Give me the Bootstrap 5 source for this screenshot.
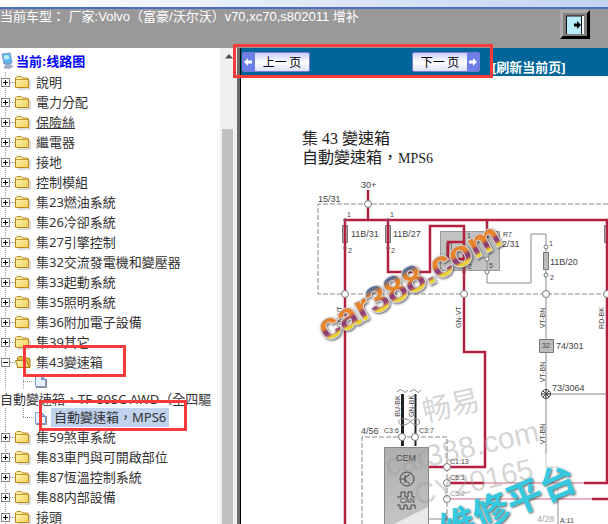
<!DOCTYPE html>
<html lang="zh-Hant">
<head>
<meta charset="utf-8">
<meta name="viewport" content="width=device-width, initial-scale=1">
<title>线路图</title>
<link href="https://cdn.jsdelivr.net/npm/bootstrap@5.3.0/dist/css/bootstrap.min.css" rel="stylesheet">
<style>
body{font:13px/20px "Noto Sans","Noto Sans CJK TC",sans-serif;color:#333;background:#fff}
.topstrip{height:9px;background:linear-gradient(90deg,#fff,#c3d3f0);border-bottom:2px solid #4a6fc0}
.carbar{height:39px;background:#999;color:#fff;font:13px/16px "Liberation Sans","Noto Sans CJK SC",sans-serif}
.exitbtn{width:30px;height:29px;margin:1px 18px 0 0;background:#808080;border:3px solid;border-color:#aaa #000 #000 #aaa}
.frames{min-height:0}
.treepane{width:220px}
.treehead{height:24px;padding-top:4px;font:bold 13px/20px "Liberation Sans","Noto Sans CJK SC",sans-serif}
.treehead a{color:#00f}
.tree a{color:#333;text-decoration:none;white-space:nowrap}
.tree a.hovered{text-decoration:underline}
.noderow{height:20px;background:linear-gradient(#999 50%,transparent 50%) 5px 0/1px 2px repeat-y}
.tog{width:9px;height:9px;margin-left:1px;border:1px solid #848484;background:#fff;color:#000}
.dots{width:5px;height:1px;background:repeating-linear-gradient(90deg,#999 0 1px,transparent 1px 2px)}
.dots.far{width:12px}
.fold{width:16px;height:16px;margin-right:5px}
.leafrow{height:18px;padding-left:23px;background:linear-gradient(#999 50%,transparent 50%) 5px 0/1px 2px repeat-y,linear-gradient(#999 50%,transparent 50%) 23px 0/1px 2px repeat-y}
.leafrow.final{height:19px;background:linear-gradient(#999 50%,transparent 50%) 5px 0/1px 2px repeat-y,repeating-linear-gradient(#999 0 1px,transparent 1px 2px) 23px 0/1px 10px no-repeat}
.leaftext{height:18px;line-height:18px}
.tree a.chosen{background:#c1d2ee;padding:0 3px;line-height:19px}
.redbox{position:absolute;border:3px solid #f93a3a;pointer-events:none;z-index:3}
.rb-group{left:23px;top:-7px;width:103px;height:32px}
.rb-leaf{left:39px;top:-8px;width:148px;height:31px}
.rb-page{left:-8px;top:-4px;width:260px;height:34px}
.sbar{width:17px;background:#f0f0f0}
.sup{height:17px}
.sthumb{background:#c1c1c1;margin:0 0 0 2px}
.gutter{width:4px;background:#6b6b6b;border-right:1px solid #000}
.docpane{min-width:0}
.pagebar{height:28px;background:#069;padding-left:1px}
.pgbtn{height:20px;width:68px;border:1px solid #7a7ad6;border-radius:2px;background:linear-gradient(#c9cffa,#fff 50%,#dde0fa);color:#000;font:12px/18px "Noto Sans CJK SC",sans-serif}
.pgbtn .cap{width:12px;background:#6d7ee6}
.pggap{gap:102px}
.reload{color:#fff;font:bold 13px/18px "Noto Sans","Noto Sans CJK SC",sans-serif;text-decoration:none}
.docttl{font:16px/19px "Liberation Serif","Noto Sans CJK TC",serif;color:#222;padding:53px 0 3px 61px}
.docttl span{font-size:14px}
.wiring{font-family:"Liberation Sans","Noto Sans CJK SC",sans-serif;font-size:9px;fill:#444}
.wiring .sm{font-size:7px}
.red{stroke:#b3203f;stroke-width:2.500;fill:none}
.pink{stroke:#eeb0bd;stroke-width:2;fill:none}
.gry{stroke:#8a8a8a;stroke-width:1;fill:none}
.dsh{stroke:#8a8a8a;stroke-width:1;fill:none;stroke-dasharray:5 2}
.pin{fill:#fff;stroke:#777;stroke-width:1}
.ghost{fill:#999;fill-opacity:.42}
</style>
<script src="https://cdn.jsdelivr.net/npm/bootstrap@5.3.0/dist/js/bootstrap.bundle.min.js"></script>
</head>
<body class="vh-100 overflow-hidden d-flex flex-column">
<svg width="0" height="0" class="position-absolute" aria-hidden="true">
<defs>
<linearGradient id="gold" x1="0" y1="0" x2="1" y2="1"><stop offset="0" stop-color="#fffbc0"/><stop offset="1" stop-color="#f2ce58"/></linearGradient>
<symbol id="folder" viewBox="0 0 16 16"><path d="M2.500 15h12.500v-9" stroke="#bbb" fill="none"/><path d="M.5 13.500V4l1.500-1.500h4L7.500 4h5l1 1v8.500z" fill="url(#gold)" stroke="#b98a1e"/><path d="M1 5.500h12" stroke="#c99b2c"/></symbol>
<symbol id="openfolder" viewBox="0 0 16 16"><path d="M2.500 13.500V4L4 2.500h3L8.500 4h5l1.500 1v8.500z" fill="#e5b93e" stroke="#a87c15"/><path d="M.5 6.500h11l3 7H3z" fill="url(#gold)" stroke="#a87c15"/></symbol>
<symbol id="sheet" viewBox="0 0 16 16"><path d="M1 14.500h10.500V6" stroke="#888" fill="none"/><path d="M.5 2.500h6l4 4v7h-10z" fill="#e6effc" stroke="#7f9fd2"/><path d="M6.500 2.500v4h4z" fill="#8fb0e4" stroke="#6a8dc8"/></symbol>
<symbol id="plus" viewBox="0 0 7 7"><path d="M1 3.500h5M3.500 1v5" stroke="#000"/></symbol>
<symbol id="minus" viewBox="0 0 7 7"><path d="M1 3.500h5" stroke="#000"/></symbol>
</defs>
</svg>
<div class="topstrip flex-shrink-0"></div>
<header class="carbar flex-shrink-0 d-flex justify-content-between">
<div class="text-nowrap">当前车型： 厂家:Volvo（富豪/沃尔沃）v70,xc70,s802011 增补</div>
<button class="exitbtn p-0 d-flex align-items-center justify-content-center flex-shrink-0" aria-label="退出"><svg width="18" height="20" viewBox="0 0 18 20"><path d="M0 1h18v18H0z" fill="#b9ecfa"/><path d="M0 1h18M.5 1v18" stroke="#111"/><path d="M15.500 1v18" stroke="#111"/><path d="M17 1v18" stroke="#fff" stroke-width="2"/><path d="M8 8.500h3V6l4 4-4 4v-2.500H8z" fill="#000"/></svg></button>
</header>
<main class="frames d-flex flex-grow-1">
<nav class="treepane flex-shrink-0 overflow-hidden" aria-label="目录">
<div class="treehead d-flex"><svg width="16" height="18" viewBox="0 0 16 18" class="flex-shrink-0"><path d="M2 2l8-1 2 10-8 1z" fill="#54b7ee" stroke="#7c98c8"/><path d="M3.500 3.500l5-.5 1 4-5 1z" fill="#b9e8ff"/><path d="M6 12l4-.5 1 2 2 1-4 2-5-.5z" fill="#9fb2d0" stroke="#7f8ca8" stroke-width=".6"/></svg><a href="#" class="text-decoration-none">当前:线路图</a></div>
<ul class="tree list-unstyled mb-0" id="tree"></ul>
</nav>
<div class="sbar flex-shrink-0 d-flex flex-column" aria-hidden="true"><div class="sup d-flex justify-content-center align-items-center"><svg width="8" height="5"><path d="M0 4.500L4 0l4 4.500z" fill="#505050"/></svg></div><div class="pt-5"></div><div class="pt-3"></div><div class="sthumb flex-grow-1 me-1"></div></div>
<div class="gutter flex-shrink-0"></div>
<section class="docpane flex-grow-1 d-flex flex-column">
<div class="pagebar position-relative flex-shrink-0 d-flex align-items-center">
<div class="pggap d-flex">
<button class="pgbtn p-0 d-flex flex-shrink-0"><span class="cap align-self-stretch d-flex align-items-center"><svg width="11" height="12"><path d="M1 6l4-4v2.500h4v3H5V10z" fill="#fff"/></svg></span><span class="flex-grow-1">上一 页</span></button>
<button class="pgbtn p-0 d-flex flex-shrink-0"><span class="flex-grow-1">下一 页</span><span class="cap align-self-stretch d-flex align-items-center"><svg width="11" height="12"><path d="M10 6L6 2v2.500H2v3h4V10z" fill="#fff"/></svg></span></button>
</div>
<a href="#" class="reload align-self-end text-nowrap ms-2 ps-1">[刷新当前页]</a>
<div class="redbox rb-page"></div>
</div>
<h1 class="docttl mb-0 text-nowrap">集 43 變速箱<br>自動變速箱，<span>MPS6</span></h1>
<svg class="wiring w-100 flex-shrink-0" viewBox="241 170 367 354" role="img" aria-label="自動變速箱線路圖">
<defs>
<linearGradient id="rain" x1="0" y1="0" x2="0" y2="1"><stop offset=".2" stop-color="#4a6a9c"/><stop offset=".36" stop-color="#e8852a"/><stop offset=".5" stop-color="#e8852a"/><stop offset=".6" stop-color="#843a78"/><stop offset=".68" stop-color="#a04a70"/><stop offset=".76" stop-color="#f3e02c"/><stop offset=".85" stop-color="#d8a020"/></linearGradient>
<filter id="sh" x="-10%" y="-20%" width="120%" height="150%"><feDropShadow dx="1" dy="1" stdDeviation="1" flood-color="#333" flood-opacity=".8"/></filter>
<linearGradient id="ecu" x1="0" y1="0" x2="0" y2="1"><stop offset="0" stop-color="#aeaeae"/><stop offset="1" stop-color="#c4c4c4"/></linearGradient>
</defs>
<path class="dsh" d="M608 203H318V293H608"/>
<path class="dsh" d="M362 524V436H447V524"/>
<path fill="#c2c2c2" stroke="#999" d="M440.500 230.500h59v39h-59z"/>
<path class="gry" d="M487 258v24h44v-49h15v220M487 258l5-8M546 393h61"/>
<path stroke="#ccc" fill="none" d="M546 453v13h12v34"/>
<path class="gry" d="M558 500v24M429 518h20"/>
<g fill="#bbb" stroke="#777"><path d="M342.500 224.500h5v17h-5zM385.500 224.500h5v17h-5zM543.500 251.500h5v17h-5zM604.500 224.500h5v17h-5zM446.500 242.500h5v15h-5zM539.500 338.500h14v13h-14z"/></g>
<text class="sm" text-anchor="middle" transform="translate(342 316) rotate(-90)">GN-VT</text>
<path class="red" d="M368 189v30M344 219H608M345 219V524M388 219V271H430V225H464V351H485V466H429M464 241H448V258H464M487 219v18M607 219V482"/>
<path class="red" d="M447 482h37M584 482h24M592 498h16"/><path class="pink" d="M484 482h100M447 498h145"/>
<path d="M402.500 393v52" stroke="#222" stroke-width="3"/><path d="M415.500 393v52" stroke="#222" stroke-width="2"/>
<path class="gry" d="M397 391q4-4 6-1t5-1M410 391q4-4 6-1t5-1M402 418c8-2 9 6 14 6 5 0 5-6 0-6-5 0-8 7-14 6-5-1-4-6 0-6"/>
<path fill="url(#ecu)" stroke="#888" d="M384.500 446.500h44V524h-44z"/><path d="M392 524l36-18v18z" fill="#e9e9e9"/>
<g fill="none" stroke="#444"><circle cx="407" cy="478" r="7"/><path d="M401 478h4M405 474v8M405 477l5-4M405 479l5 4"/><path d="M397 496h4v-5h4v5h3v-5h4v5h3M397 504h3v4h4v-4h3v4h4v-4h4v4"/><circle cx="546" cy="393" r="4.500"/><path d="M543 390l6 6M549 390l-6 6M541 393h10M546 389v8"/></g>
<g class="pin"><circle cx="368" cy="203" r="3.500"/><circle cx="345" cy="293" r="3.500"/><circle cx="464" cy="293" r="3.500"/><circle cx="546" cy="293" r="3.500"/><circle cx="607" cy="293" r="3.500"/><circle cx="402" cy="436" r="3.500"/><circle cx="415" cy="436" r="3.500"/><circle cx="447" cy="466" r="3.500"/><circle cx="447" cy="482" r="3.500"/><circle cx="447" cy="498" r="3.500"/><circle cx="546" cy="246" r="2"/><circle cx="546" cy="274" r="2"/><circle cx="487" cy="258" r="2"/><circle cx="487" cy="271" r="2"/></g>
<g fill="#b3244a" stroke="#777" stroke-width=".5"><circle cx="345" cy="219" r="1.500"/><circle cx="388" cy="219" r="1.500"/><circle cx="345" cy="247" r="1.500"/><circle cx="388" cy="247" r="1.500"/><circle cx="464" cy="271" r="1.500"/></g>
<text x="361" y="187">30+</text><text x="318" y="201">15/31</text><text x="351" y="236">11B/31</text><text x="393" y="236">11B/27</text><text x="550" y="264">11B/20</text><text x="556" y="348">74/301</text><text x="552" y="390">73/3064</text><text x="361" y="433">4/56</text><text x="396" y="460">CEM</text><text x="502" y="246">2/31</text><text x="537" y="521" fill-opacity=".5">4/28</text>
<g class="sm"><text x="347" y="216">1</text><text x="390" y="216">1</text><text x="348" y="252">2</text><text x="391" y="252">2</text><text x="467" y="237">1</text><text x="468" y="268">2</text><text x="489" y="267">5</text><text x="549" y="245">1</text><text x="550" y="279">2</text><text x="503" y="236">R7</text><text x="542" y="347">32</text><text x="384" y="432">C3:6</text><text x="419" y="432">C3:7</text><text x="450" y="463">C1:13</text><text x="450" y="479">C5:1</text><text x="450" y="495" fill-opacity=".6">C5:2</text><text x="400" y="502">CAN</text><text x="560" y="522">A:11</text>
<g text-anchor="middle"><text transform="translate(461 316) rotate(-90)">GN-VT</text><text transform="translate(545 317) rotate(-90)">VT-BN</text><text transform="translate(545 371) rotate(-90)">VT-BN</text><text transform="translate(545 433) rotate(-90)">VT-BN</text><text transform="translate(604 317) rotate(-90)">RD-BK</text><text transform="translate(400 405) rotate(-90)">BU-BK</text><text transform="translate(414 405) rotate(-90)">GN-BK</text></g></g>
<g class="ghost"><text transform="translate(425 421) rotate(-13)" font-size="29">畅易</text><text transform="translate(388 475) rotate(-13)" font-size="30">car388.com</text><text transform="translate(417 504) rotate(-13)" font-size="29">CY20165</text></g>
<g font-weight="bold" filter="url(#sh)"><text transform="translate(326 341) rotate(-29)" font-size="37" fill="url(#rain)" stroke="#d8d4d8" stroke-width="2" paint-order="stroke">car388.com</text></g>
<g font-weight="bold" filter="url(#sh)"><text transform="translate(508 503) rotate(-23)" y="13" text-anchor="middle" font-size="36" fill="#35c8de">维修平台</text></g>
</svg>
</section>
</main>
<script>
const nodes = ['說明','電力分配','保險絲','繼電器','接地','控制模組','集23燃油系統','集26冷卻系統','集27引擎控制','集32交流發電機和變壓器','集33起動系統','集35照明系統','集36附加電子設備','集39其它','集43變速箱','集59煞車系統','集83車門與可開啟部位','集87恆溫控制系統','集88内部設備','接頭'];
const leaves = '<ul class="list-unstyled mb-0"><li><a href="#" class="d-block"><span class="leafrow d-flex align-items-center"><span class="dots far"></span><svg class="fold"><use href="#sheet"/></svg></span><span class="leaftext d-block">自動變速箱，TF-80SC AWD（全四驅</span></a></li><li class="leafrow final d-flex align-items-center position-relative"><span class="dots far"></span><svg class="fold m-0"><use href="#sheet"/></svg><a href="#" class="chosen">自動變速箱，MPS6</a><span class="redbox rb-leaf"></span></li></ul>';
document.getElementById('tree').innerHTML = nodes.map(n => {
  const open = n === '集43變速箱';
  return `<li><div class="noderow d-flex align-items-center position-relative"><button class="tog p-0 d-flex" aria-label="${open ? '收合' : '展開'} ${n}"><svg width="7" height="7"><use href="#${open ? 'minus' : 'plus'}"/></svg></button><span class="dots"></span><svg class="fold"><use href="#${open ? 'openfolder' : 'folder'}"/></svg><a href="#" class="${n === '保險絲' ? 'hovered' : ''}">${n}</a>${open ? '<span class="redbox rb-group"></span>' : ''}</div>${open ? leaves : ''}</li>`;
}).join('');
</script>
</body>
</html>
